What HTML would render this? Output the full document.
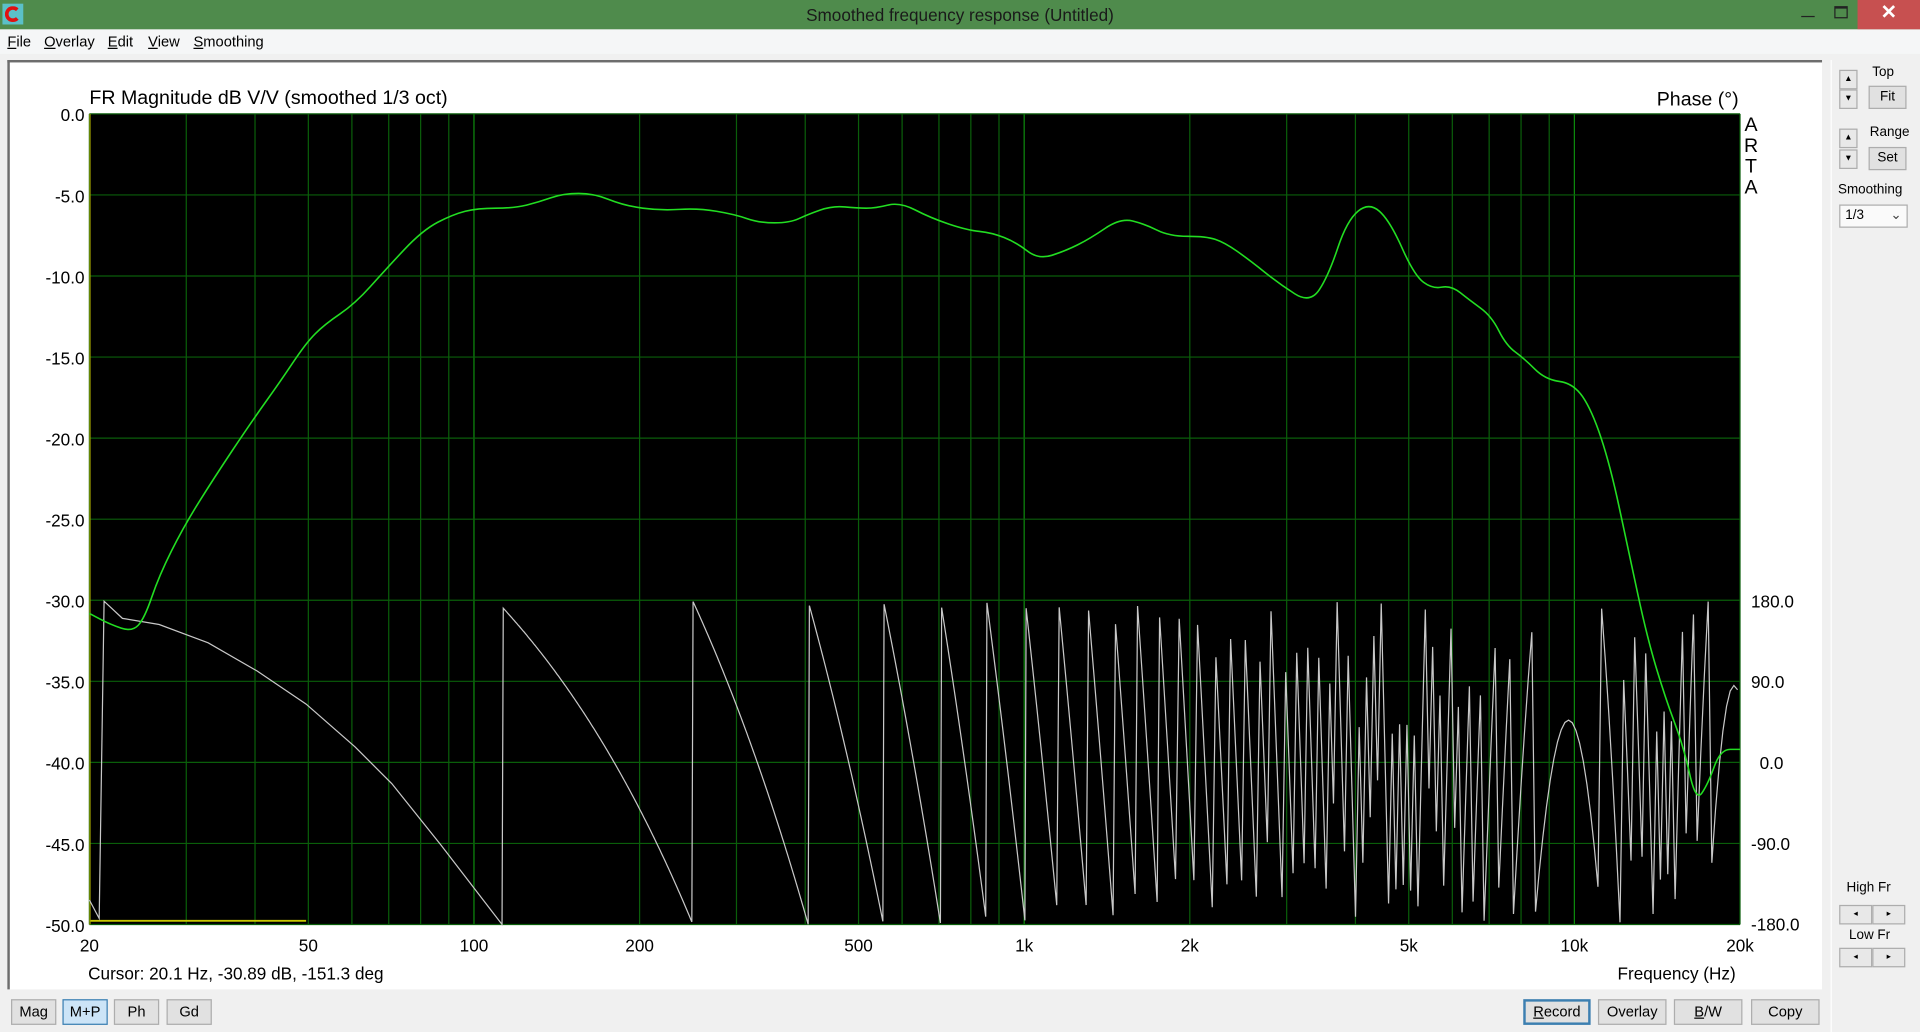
<!DOCTYPE html>
<html><head><meta charset="utf-8"><style>
*{margin:0;padding:0;box-sizing:border-box}
body{width:1920px;height:1032px;overflow:hidden;background:#f0f0f0;font-family:"Liberation Sans",sans-serif}
#w{position:absolute;left:0;top:0;width:1568px;height:843px;transform:scale(1.22449);transform-origin:0 0;background:#f0f0f0}
.a{position:absolute;white-space:nowrap}
.btn{position:absolute;height:21px;border:1px solid #adadad;background:#e1e1e1;font-size:12px;text-align:center;line-height:19px;color:#000}
.sp{position:absolute;width:15px;height:16px;border:1px solid #adadad;background:#e8e8e8;font-size:7px;text-align:center;line-height:14px}
u{text-decoration:underline}
</style></head><body><div id="w">
<div class="a" style="left:0;top:0;width:1568px;height:24px;background:#4f8b4c"></div>
<div class="a" style="left:2px;top:3px;width:17px;height:17px;background:#5bc0c8"><div style="position:absolute;left:2px;top:2px;width:13px;height:13px;border:3px solid #e01010;border-radius:50%;border-right-color:transparent"></div></div>
<div class="a" style="left:0;width:1568px;top:4px;text-align:center;font-size:14px;color:#1a1a1a">Smoothed frequency response (Untitled)</div>
<div class="a" style="left:1471px;top:13px;width:11px;height:1px;background:#222"></div>
<div class="a" style="left:1498px;top:5px;width:11px;height:10px;border:1px solid #222;border-top-width:2px"></div>
<div class="a" style="left:1517px;top:0;width:51px;height:24px;background:#c75050;color:#fff;text-align:center;font-size:16px;line-height:22px;font-weight:bold">✕</div>
<div class="a" style="left:0;top:24px;width:1568px;height:20px;background:#f5f6f7;font-size:12px;line-height:20px">
<span class="a" style="left:6px"><u>F</u>ile</span><span class="a" style="left:36px"><u>O</u>verlay</span><span class="a" style="left:88px"><u>E</u>dit</span><span class="a" style="left:121px"><u>V</u>iew</span><span class="a" style="left:158px"><u>S</u>moothing</span></div>
<div class="a" style="left:6px;top:49px;width:1482px;height:759px;background:#fff;border-top:2px solid #6d6d6d;border-left:2px solid #6d6d6d"></div>
<div class="a" style="left:73px;top:72px;font-size:16px">FR Magnitude dB V/V (smoothed 1/3 oct)</div>
<div class="a" style="left:1353px;top:73px;font-size:16px">Phase (°)</div>
<div class="a" style="left:1424px;top:94px;font-size:16px;line-height:17px;text-align:center;width:12px">A<br>R<br>T<br>A</div>
<svg class="a" style="left:0;top:0" width="1568" height="843" id="sv"></svg>
<div class="a" style="left:72px;top:787px;font-size:14px">Cursor: 20.1 Hz, -30.89 dB, -151.3 deg</div>
<div class="a" style="left:1321px;top:787px;font-size:14px">Frequency (Hz)</div>
<div class="btn" style="left:9px;top:816px;width:37px">Mag</div>
<div class="btn" style="left:51px;top:816px;width:37px;background:#cce4f7;border-color:#3c7fb1">M+P</div>
<div class="btn" style="left:93px;top:816px;width:37px">Ph</div>
<div class="btn" style="left:136px;top:816px;width:37px">Gd</div>
<div class="btn" style="left:1244px;top:816px;width:55px;border:2px solid #3c7fb1;line-height:17px"><u>R</u>ecord</div>
<div class="btn" style="left:1305px;top:816px;width:56px">Overlay</div>
<div class="btn" style="left:1367px;top:816px;width:56px"><u>B</u>/W</div>
<div class="btn" style="left:1430px;top:816px;width:56px">Copy</div>
<div class="a" style="left:1529px;top:53px;font-size:11px">Top</div>
<div class="sp" style="left:1502px;top:57px">▲</div><div class="sp" style="left:1502px;top:73px">▼</div>
<div class="btn" style="left:1526px;top:70px;width:31px;height:19px;line-height:17px;font-size:11px">Fit</div>
<div class="a" style="left:1527px;top:102px;font-size:11px">Range</div>
<div class="sp" style="left:1502px;top:105px">▲</div><div class="sp" style="left:1502px;top:122px">▼</div>
<div class="btn" style="left:1526px;top:120px;width:31px;height:19px;line-height:17px;font-size:11px">Set</div>
<div class="a" style="left:1501px;top:149px;font-size:11px">Smoothing</div>
<div class="a" style="left:1502px;top:167px;width:56px;height:19px;border:1px solid #adadad;background:#fafafa;font-size:11px;line-height:17px;padding-left:4px">1/3<span style="position:absolute;right:4px;color:#444">⌄</span></div>
<div class="a" style="left:1508px;top:719px;font-size:11px">High Fr</div>
<div class="sp" style="left:1502px;top:739px;width:27px">◂</div><div class="sp" style="left:1529px;top:739px;width:27px">▸</div>
<div class="a" style="left:1510px;top:758px;font-size:11px">Low Fr</div>
<div class="sp" style="left:1502px;top:774px;width:27px">◂</div><div class="sp" style="left:1529px;top:774px;width:27px">▸</div>
<div class="a" style="left:1495px;top:49px;width:1px;height:794px;background:#fff"></div>
</div>
<script>
var L=73,R=1421,T=93,B=755,D=(R-L)/3;
function X(f){return L+Math.log10(f/20)*D}
var s='<rect x="73" y="93" width="1348" height="662" fill="#000"/>';
var fs=[20,30,40,50,60,70,80,90,100,200,300,400,500,600,700,800,900,1000,2000,3000,4000,5000,6000,7000,8000,9000,10000,20000];
fs.forEach(function(f){var x=X(f);var br=(f==100||f==1000||f==10000);s+='<line x1="'+x+'" y1="93" x2="'+x+'" y2="755" stroke="'+(br?'#0d8a0d':'#0a5e0a')+'" stroke-width="1"/>';});
for(var i=0;i<=10;i++){var y=T+i*(B-T)/10;s+='<line x1="73" y1="'+y+'" x2="1421" y2="'+y+'" stroke="#0a5e0a"/>';
s+='<text x="69" y="'+(y+6)+'" text-anchor="end" font-size="14" font-family="Liberation Sans">'+(i==0?'0.0':'-'+(i*5)+'.0')+'</text>';}
var pl=['180.0','90.0','0.0','-90.0','-180.0'];
for(var i=0;i<5;i++){var y=491+i*66;s+='<text x="'+(i==2?1437:1430)+'" y="'+(y+5)+'" font-size="14" font-family="Liberation Sans">'+pl[i]+'</text>';}
var lb=[[20,'20'],[50,'50'],[100,'100'],[200,'200'],[500,'500'],[1000,'1k'],[2000,'2k'],[5000,'5k'],[10000,'10k'],[20000,'20k']];
lb.forEach(function(l){s+='<text x="'+X(l[0])+'" y="777" text-anchor="middle" font-size="14" font-family="Liberation Sans">'+l[1]+'</text>';});
s+='<line x1="73" y1="752" x2="250" y2="752" stroke="#c8c800" stroke-width="1.5"/>';
s+='<line x1="73.5" y1="93" x2="73.5" y2="755" stroke="#a0a000"/>';
// phase
var p='M73 735 L81 750 L85 491 L100 505 L130 510 L170 525 L210 548 L250 575 L290 610 L320 640 L360 690 L410 755';
function cyc(f){var k=[[110,1],[250,2],[405,3]];
if(f>=405)return 3+(f-405)/150;
var t=(f-k[0][0])/(k[1][0]-k[0][0]);if(f<250)return 1+t;return 2+(f-250)/155;}
var step=1;
for(var x=411;x<=R;x+=step){if(x>950)step=3;else if(x>850)step=2;var f=20*Math.pow(10,(x-L)/D);var c=cyc(f);var fr=c-Math.floor(c);
var ph=180-360*fr;var y=623-ph*66/90;p+='L'+x+' '+y.toFixed(1);}
s+='<path d="'+p+'" fill="none" stroke="#c8c8c8" stroke-width="1"/>';
var m=[[73,501],[90,510],[108,516],[118,505],[130,470],[150,430],[175,390],[205,345],[230,310],[250,280],[265,265],[290,248],[315,220],[345,188],[370,175],[390,170],[420,170],[440,165],[460,158],[485,158],[510,168],[540,172],[570,170],[600,175],[620,182],[645,182],[660,175],[680,168],[700,170],[715,170],[735,165],[760,178],[790,188],[810,190],[830,198],[848,212],[870,205],[890,195],[915,178],[935,183],[955,193],[985,193],[1000,198],[1020,212],[1045,232],[1070,248],[1085,225],[1100,180],[1118,165],[1135,180],[1155,225],[1170,236],[1185,233],[1200,245],[1218,258],[1230,282],[1245,293],[1262,310],[1285,313],[1300,335],[1315,380],[1330,450],[1345,520],[1360,570],[1375,610],[1385,655],[1395,640],[1405,612],[1421,612]];
var q='M'+m[0][0]+' '+m[0][1];for(var i=1;i<m.length;i++){var a=m[i-1],b=m[i];q+=' Q'+a[0]+' '+a[1]+' '+((a[0]+b[0])/2)+' '+((a[1]+b[1])/2);}q+=' L1421 612';
s+='<path d="'+q+'" fill="none" stroke="#22dd22" stroke-width="1.3"/>';
document.getElementById('sv').innerHTML=s;
</script>
</body></html>
